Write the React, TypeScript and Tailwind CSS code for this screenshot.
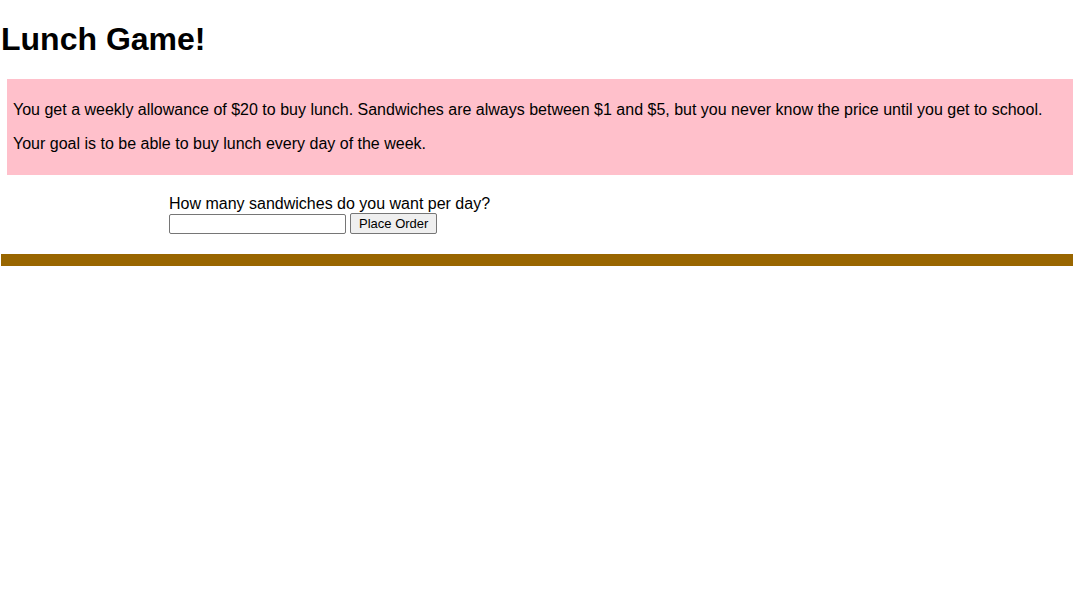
import React, { useState } from "react";

const App: React.FC = () => {
  const [count, setCount] = useState("");

  return (
    <div className="min-h-[599px] bg-white text-black font-['Liberation_Sans',Arial,sans-serif] text-base">
      <h1 className="pl-[1px] pt-[21px] pb-[21px] text-[32px] leading-[37px] font-bold">Lunch Game!</h1>

      <div className="ml-[7px] bg-[#ffc0cb] pl-[6px] pt-[6px] pb-[6px]">
        <p className="my-4 leading-[18px]">
          You get a weekly allowance of $20 to buy lunch. Sandwiches are always between $1 and $5, but you never know the
          price until you get to school.
        </p>
        <p className="my-4 leading-[18px]">Your goal is to be able to buy lunch every day of the week.</p>
      </div>

      <div className="pl-[169px] pt-[20px] pb-[20px]">
        <div className="leading-[18px]">How many sandwiches do you want per day?</div>
        <div className="flex items-center gap-[4px]">
          <input
            type="text"
            value={count}
            onChange={(e) => setCount(e.target.value)}
            className="w-[177px] h-[20px] border border-[#767676] rounded-[2px] px-[2px] text-[13px] outline-none"
          />
          <button className="h-[21px] px-[8px] border border-[#767676] rounded-[2px] bg-[#efefef] text-[13px] leading-[15px]">
            Place Order
          </button>
        </div>
      </div>

      <div className="ml-[1px] h-[12px] bg-[#996600]" />
    </div>
  );
};

export default App;
